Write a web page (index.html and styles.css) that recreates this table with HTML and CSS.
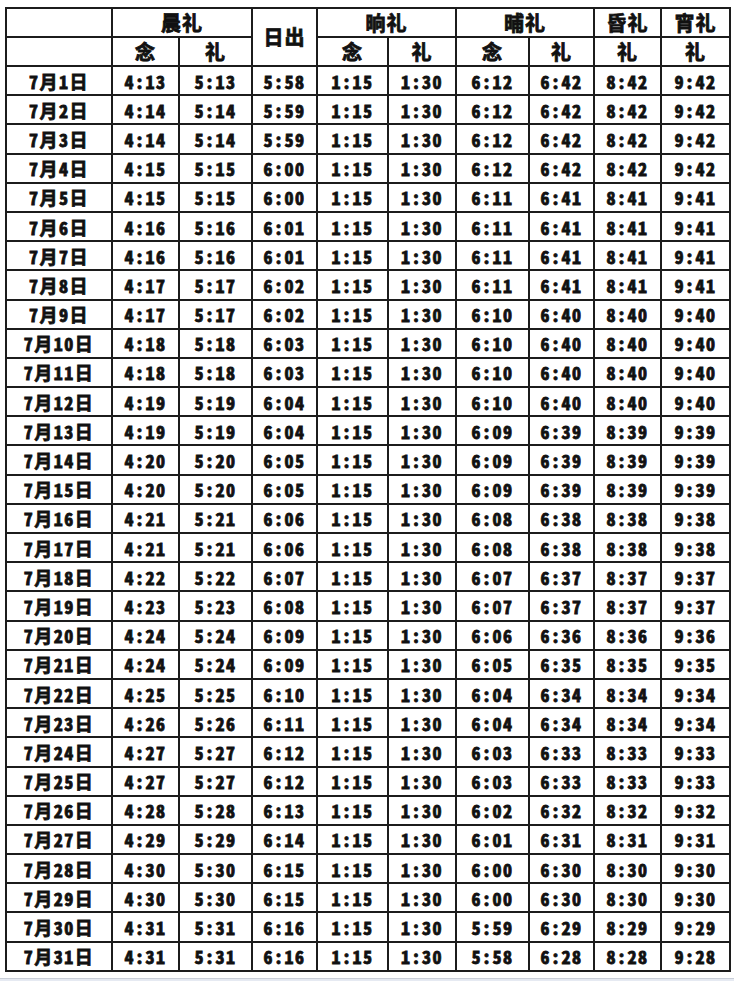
FILE: index.html
```html
<!DOCTYPE html>
<html lang="zh-CN">
<head>
<meta charset="utf-8">
<title>7月礼拜时间表</title>
<link rel="stylesheet" href="styles.css">
</head>
<body>
<div class="page">
<table class="times">
<colgroup>
<col class="c-date"><col class="c1"><col class="c2"><col class="c3"><col class="c4"><col class="c5"><col class="c6"><col class="c7"><col class="c8"><col class="c9">
</colgroup>
<thead>
<tr><th></th><th colspan="2">晨礼</th><th rowspan="2">日出</th><th colspan="2">晌礼</th><th colspan="2">晡礼</th><th>昏礼</th><th>宵礼</th></tr>
<tr><th></th><th>念</th><th>礼</th><th>念</th><th>礼</th><th>念</th><th>礼</th><th>礼</th><th>礼</th></tr>
</thead>
<tbody>
<tr><td>7月1日</td><td>4:13</td><td>5:13</td><td>5:58</td><td>1:15</td><td>1:30</td><td>6:12</td><td>6:42</td><td>8:42</td><td>9:42</td></tr>
<tr><td>7月2日</td><td>4:14</td><td>5:14</td><td>5:59</td><td>1:15</td><td>1:30</td><td>6:12</td><td>6:42</td><td>8:42</td><td>9:42</td></tr>
<tr><td>7月3日</td><td>4:14</td><td>5:14</td><td>5:59</td><td>1:15</td><td>1:30</td><td>6:12</td><td>6:42</td><td>8:42</td><td>9:42</td></tr>
<tr><td>7月4日</td><td>4:15</td><td>5:15</td><td>6:00</td><td>1:15</td><td>1:30</td><td>6:12</td><td>6:42</td><td>8:42</td><td>9:42</td></tr>
<tr><td>7月5日</td><td>4:15</td><td>5:15</td><td>6:00</td><td>1:15</td><td>1:30</td><td>6:11</td><td>6:41</td><td>8:41</td><td>9:41</td></tr>
<tr><td>7月6日</td><td>4:16</td><td>5:16</td><td>6:01</td><td>1:15</td><td>1:30</td><td>6:11</td><td>6:41</td><td>8:41</td><td>9:41</td></tr>
<tr><td>7月7日</td><td>4:16</td><td>5:16</td><td>6:01</td><td>1:15</td><td>1:30</td><td>6:11</td><td>6:41</td><td>8:41</td><td>9:41</td></tr>
<tr><td>7月8日</td><td>4:17</td><td>5:17</td><td>6:02</td><td>1:15</td><td>1:30</td><td>6:11</td><td>6:41</td><td>8:41</td><td>9:41</td></tr>
<tr><td>7月9日</td><td>4:17</td><td>5:17</td><td>6:02</td><td>1:15</td><td>1:30</td><td>6:10</td><td>6:40</td><td>8:40</td><td>9:40</td></tr>
<tr><td>7月10日</td><td>4:18</td><td>5:18</td><td>6:03</td><td>1:15</td><td>1:30</td><td>6:10</td><td>6:40</td><td>8:40</td><td>9:40</td></tr>
<tr><td>7月11日</td><td>4:18</td><td>5:18</td><td>6:03</td><td>1:15</td><td>1:30</td><td>6:10</td><td>6:40</td><td>8:40</td><td>9:40</td></tr>
<tr><td>7月12日</td><td>4:19</td><td>5:19</td><td>6:04</td><td>1:15</td><td>1:30</td><td>6:10</td><td>6:40</td><td>8:40</td><td>9:40</td></tr>
<tr><td>7月13日</td><td>4:19</td><td>5:19</td><td>6:04</td><td>1:15</td><td>1:30</td><td>6:09</td><td>6:39</td><td>8:39</td><td>9:39</td></tr>
<tr><td>7月14日</td><td>4:20</td><td>5:20</td><td>6:05</td><td>1:15</td><td>1:30</td><td>6:09</td><td>6:39</td><td>8:39</td><td>9:39</td></tr>
<tr><td>7月15日</td><td>4:20</td><td>5:20</td><td>6:05</td><td>1:15</td><td>1:30</td><td>6:09</td><td>6:39</td><td>8:39</td><td>9:39</td></tr>
<tr><td>7月16日</td><td>4:21</td><td>5:21</td><td>6:06</td><td>1:15</td><td>1:30</td><td>6:08</td><td>6:38</td><td>8:38</td><td>9:38</td></tr>
<tr><td>7月17日</td><td>4:21</td><td>5:21</td><td>6:06</td><td>1:15</td><td>1:30</td><td>6:08</td><td>6:38</td><td>8:38</td><td>9:38</td></tr>
<tr><td>7月18日</td><td>4:22</td><td>5:22</td><td>6:07</td><td>1:15</td><td>1:30</td><td>6:07</td><td>6:37</td><td>8:37</td><td>9:37</td></tr>
<tr><td>7月19日</td><td>4:23</td><td>5:23</td><td>6:08</td><td>1:15</td><td>1:30</td><td>6:07</td><td>6:37</td><td>8:37</td><td>9:37</td></tr>
<tr><td>7月20日</td><td>4:24</td><td>5:24</td><td>6:09</td><td>1:15</td><td>1:30</td><td>6:06</td><td>6:36</td><td>8:36</td><td>9:36</td></tr>
<tr><td>7月21日</td><td>4:24</td><td>5:24</td><td>6:09</td><td>1:15</td><td>1:30</td><td>6:05</td><td>6:35</td><td>8:35</td><td>9:35</td></tr>
<tr><td>7月22日</td><td>4:25</td><td>5:25</td><td>6:10</td><td>1:15</td><td>1:30</td><td>6:04</td><td>6:34</td><td>8:34</td><td>9:34</td></tr>
<tr><td>7月23日</td><td>4:26</td><td>5:26</td><td>6:11</td><td>1:15</td><td>1:30</td><td>6:04</td><td>6:34</td><td>8:34</td><td>9:34</td></tr>
<tr><td>7月24日</td><td>4:27</td><td>5:27</td><td>6:12</td><td>1:15</td><td>1:30</td><td>6:03</td><td>6:33</td><td>8:33</td><td>9:33</td></tr>
<tr><td>7月25日</td><td>4:27</td><td>5:27</td><td>6:12</td><td>1:15</td><td>1:30</td><td>6:03</td><td>6:33</td><td>8:33</td><td>9:33</td></tr>
<tr><td>7月26日</td><td>4:28</td><td>5:28</td><td>6:13</td><td>1:15</td><td>1:30</td><td>6:02</td><td>6:32</td><td>8:32</td><td>9:32</td></tr>
<tr><td>7月27日</td><td>4:29</td><td>5:29</td><td>6:14</td><td>1:15</td><td>1:30</td><td>6:01</td><td>6:31</td><td>8:31</td><td>9:31</td></tr>
<tr><td>7月28日</td><td>4:30</td><td>5:30</td><td>6:15</td><td>1:15</td><td>1:30</td><td>6:00</td><td>6:30</td><td>8:30</td><td>9:30</td></tr>
<tr><td>7月29日</td><td>4:30</td><td>5:30</td><td>6:15</td><td>1:15</td><td>1:30</td><td>6:00</td><td>6:30</td><td>8:30</td><td>9:30</td></tr>
<tr><td>7月30日</td><td>4:31</td><td>5:31</td><td>6:16</td><td>1:15</td><td>1:30</td><td>5:59</td><td>6:29</td><td>8:29</td><td>9:29</td></tr>
<tr><td>7月31日</td><td>4:31</td><td>5:31</td><td>6:16</td><td>1:15</td><td>1:30</td><td>5:58</td><td>6:28</td><td>8:28</td><td>9:28</td></tr>
</tbody>
</table>
</div>
<div class="bottom-bar"></div>
</body>
</html>
```

FILE: styles.css
```css
html, body {
  margin: 0;
  padding: 0;
  background: #ffffff;
}

.page {
  padding: 7px 0 0 5px;
  height: 978px;
  box-sizing: border-box;
}

.times {
  border-collapse: collapse;
  width: 724px;
  height: 965px;
  table-layout: fixed;
  font-family: "Noto Sans CJK SC", "Noto Sans", sans-serif;
  font-weight: 700;
  color: #111111;
  -webkit-text-stroke: 0.8px #111111;
}

.times th,
.times td {
  border: 2px solid #1c1c1c;
  padding: 0;
  text-align: center;
  vertical-align: middle;
  line-height: 1;
  white-space: nowrap;
}

.times th {
  font-size: 20px;
  letter-spacing: 1px;
}

.times td {
  font-size: 18px;
  letter-spacing: 1.5px;
  font-feature-settings: "hwid";
}

.times tr {
  height: 29px;
}

.c-date { width: 106px; }
.c1 { width: 67px; }
.c2 { width: 73px; }
.c3 { width: 65px; }
.c4 { width: 71px; }
.c5 { width: 68px; }
.c6 { width: 73px; }
.c7 { width: 65px; }
.c8 { width: 67px; }
.c9 { width: 69px; }

.bottom-bar {
  height: 3px;
  border-top: 1px solid #c9ced8;
  background: #e6eaf2;
}
```
